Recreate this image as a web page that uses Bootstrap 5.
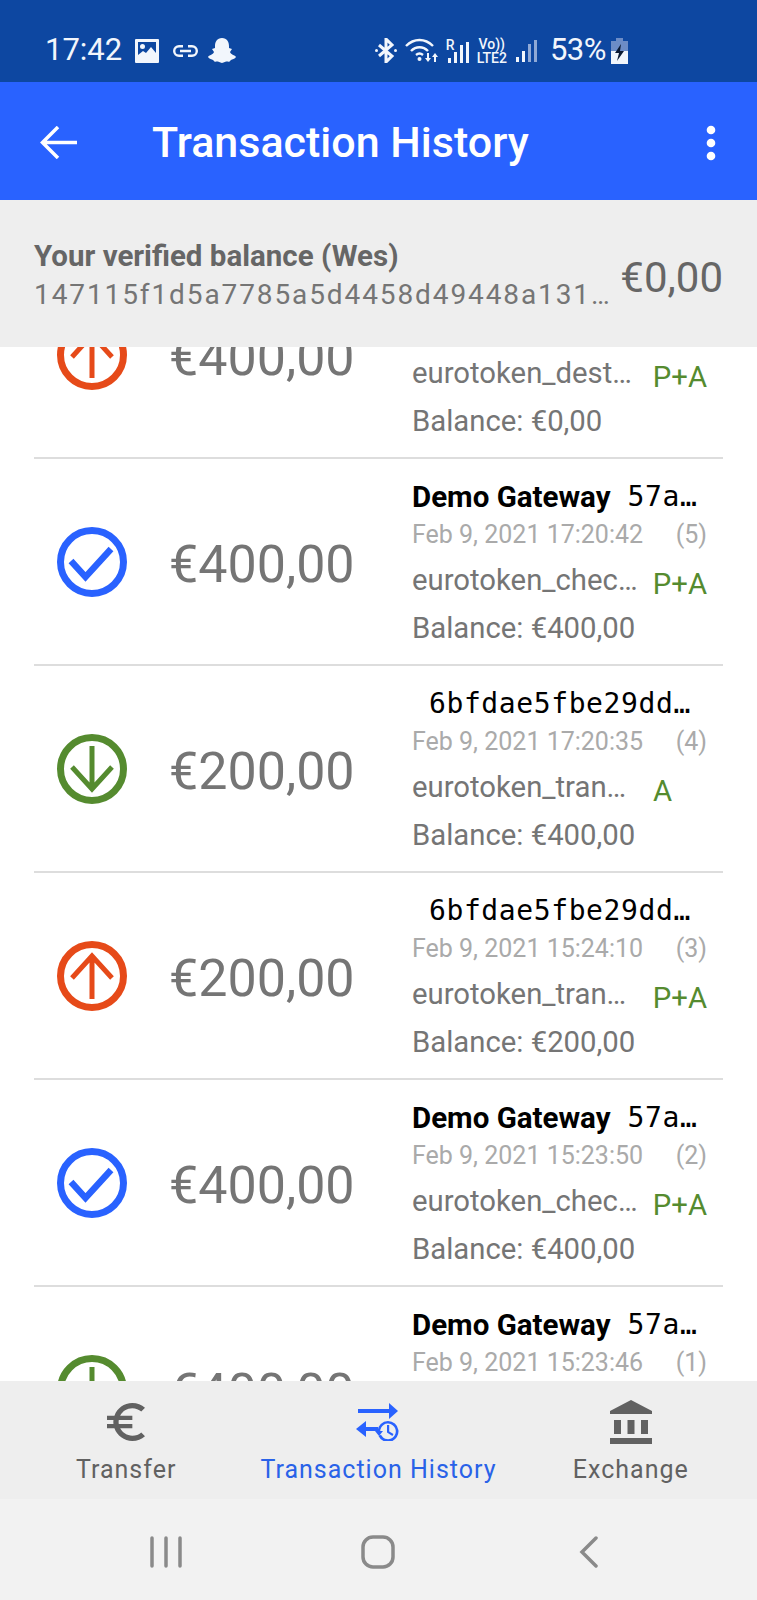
<!DOCTYPE html>
<html lang="en">
<head>
    <meta charset="UTF-8">
    <meta name="viewport" content="width=device-width, initial-scale=1.0">
    <title>Transaction History</title>
    <link href="https://cdn.jsdelivr.net/npm/bootstrap@5.3.0/dist/css/bootstrap.min.css" rel="stylesheet">
    <style>
        body {
            font-family: Roboto, "Liberation Sans", sans-serif;
            background-color: #fff;
            margin: 0;
        }
        .phone-screen { width: 757px; height: 1600px; }
        .status-strip {
            height: 82px;
            background-color: #0d47a1;
            color: #f2f6fc;
            padding: 19px 129px 0 45px;
            flex-shrink: 0;
        }
        .status-time { font-size: 31px; width: 90px; }
        .status-link { margin-left: 14px; }
        .status-ghost { margin-left: 10px; }
        .status-pct { font-size: 31px; letter-spacing: -.5px; margin-left: 13px; margin-right: 5px; }
        .status-tiny { font-size: 14px; line-height: 14px; font-weight: 500; text-align: center; }
        .app-bar {
            height: 118px;
            background-color: #2962ff;
            padding: 3px 40px 0 40px;
            flex-shrink: 0;
            flex-wrap: nowrap;
        }
        .app-title {
            color: #fff;
            font-size: 43px;
            font-weight: 500;
            margin: 0 0 0 75px;
            padding: 0;
        }
        .balance-strip {
            height: 147px;
            background-color: #eee;
            padding: 4px 34px 0;
            flex-shrink: 0;
            z-index: 2;
        }
        .balance-title { font-size: 29.5px; font-weight: 700; color: #666; line-height: 38px; }
        .balance-key { font-size: 28px; color: #757575; letter-spacing: 1.9px; line-height: 40px; width: 580px; }
        .balance-amount { font-size: 42px; color: #666; margin-top: 3px; }
        .tx-scroller { flex: 1 1 0; overflow: hidden; }
        .tx-list { margin: -95px 34px 0; }
        .tx-row { height: 207px; border-bottom: 2px solid #ddd; }
        .tx-icon { width: 70px; height: 70px; margin-left: 23px; flex-shrink: 0; }
        .tx-amount { font-size: 52px; color: #757575; margin: 6px 0 0 42px; width: 243px; flex-shrink: 0; line-height: 1; }
        .tx-info { width: 295px; padding-top: 19px; height: 100%; }
        .tx-who { height: 39px; line-height: 38px; font-size: 29.5px; font-weight: 700; color: #000; white-space: nowrap; }
        .tx-hash { font-family: "DejaVu Sans Mono", monospace; font-weight: 400; font-size: 28px; letter-spacing: .6px; }
        .tx-hash-short { margin-left: 17px; }
        .tx-hash-only { margin-left: 17px; }
        .tx-date { height: 36px; line-height: 36px; font-size: 25px; color: #aaa; }
        .tx-kind { height: 54px; line-height: 54px; font-size: 29.3px; color: #757575; }
        .tx-kind-name { width: 226px; margin-right: 15px; }
        .tx-flag { color: #558b2f; font-size: 29.3px; padding-top: 4px; }
        .tx-balance { height: 42px; line-height: 42px; font-size: 29.3px; color: #757575; }
        .bottom-tabs {
            height: 118px;
            background-color: #eee;
            flex-shrink: 0;
            color: #616161;
            z-index: 2;
        }
        .tab-item { font-size: 25px; letter-spacing: 1px; line-height: 32px; }
        .tab-icon { height: 38px; margin: 22px 0 13px; }
        .tab-icon-tall { height: 44px; margin: 19px 0 10px; }
        .tab-active { color: #2962e8; }
        .system-bar {
            height: 101px;
            background-color: #f2f2f2;
            flex-shrink: 0;
            padding-top: 4px;
        }
        .sys-left { padding-left: 80px; }
        .sys-right { padding-right: 84px; }
    </style>
</head>
<body>
    <svg width="0" height="0" class="d-block position-absolute">
        <symbol id="ic-check" viewBox="-35 -35 70 70">
            <circle r="31.5" fill="none" stroke="#2962ff" stroke-width="7"/>
            <path d="M-21-1-6.500 15 19-13" fill="none" stroke="#2962ff" stroke-width="6.500"/>
        </symbol>
        <symbol id="ic-down" viewBox="-35 -35 70 70">
            <circle r="31.5" fill="none" stroke="#558b2f" stroke-width="7"/>
            <path d="M0-23V19M-20-2 0 20 20-2" fill="none" stroke="#558b2f" stroke-width="5"/>
        </symbol>
        <symbol id="ic-up" viewBox="-35 -35 70 70">
            <circle r="31.5" fill="none" stroke="#e64a19" stroke-width="7"/>
            <path d="M0 23V-19M-20 2 0-20 20 2" fill="none" stroke="#e64a19" stroke-width="5"/>
        </symbol>
    </svg>

    <div class="phone-screen d-flex flex-column overflow-hidden">
        <!-- phone status bar -->
        <div class="status-strip d-flex align-items-center">
            <span class="status-time">17:42</span>
            <svg width="24" height="24" viewBox="0 0 24 24" class="flex-shrink-0"><path fill="#f2f6fc" fill-rule="evenodd" d="M1 0h22a1 1 0 0 1 1 1v22a1 1 0 0 1-1 1H1a1 1 0 0 1-1-1V1a1 1 0 0 1 1-1zM3 3v13l5-4 3 2 5-6 5 6V3zM7.500 5a2.500 2.500 0 1 1 0 5 2.500 2.500 0 0 1 0-5z"/></svg>
            <svg width="25" height="12" viewBox="0 0 25 12" class="status-link flex-shrink-0"><path fill="none" stroke="#f2f6fc" stroke-width="2.400" d="M10 1.200H6a4.800 4.800 0 0 0 0 9.600h4M15 1.200h4a4.800 4.800 0 0 1 0 9.600h-4M7 6h11"/></svg>
            <svg width="28" height="25" viewBox="0 0 28 25" class="status-ghost flex-shrink-0"><path fill="#f2f6fc" d="M14 0c5 0 7 4 7 8v2l3 1-2 3c1 3 5 3 6 5-1 2-4 2-5 3l-2 2c-2-1-4 0-7 1-3-1-5-2-7-1l-2-2c-1-1-4-1-5-3 1-2 5-2 6-5l-2-3 3-1V8c0-4 2-8 7-8z"/></svg>
            <svg width="22" height="25" viewBox="0 0 22 25" class="ms-auto flex-shrink-0"><path fill="none" stroke="#f2f6fc" stroke-width="3" d="M4 7l13 11-6 6V1l6 6L4 18"/><circle cx="1.500" cy="12.500" r="1.500" fill="#f2f6fc"/><circle cx="20.500" cy="12.500" r="1.500" fill="#f2f6fc"/></svg>
            <svg width="33" height="25" viewBox="0 0 33 25" class="ms-2 flex-shrink-0"><path fill="none" stroke="#f2f6fc" stroke-width="2.400" d="M1 8c8-8 19-8 27 0M6 13c5-5 12-5 17 0M11 17c2.500-2 4.500-2 7 0"/><circle cx="14.500" cy="21" r="2" fill="#f2f6fc"/><path fill="#f2f6fc" d="M22 15h2v5h2l-3 4-3-4h2zM29 24h2v-5h2l-3-4-3 4h2z"/></svg>
            <div class="position-relative ms-2 flex-shrink-0" style="width:23px;height:25px">
                <span class="status-tiny position-absolute top-0 start-0">R</span>
                <svg width="22" height="23" viewBox="0 0 22 23" class="position-absolute bottom-0 end-0"><path fill="#f2f6fc" d="M1 18h3v5H1zM7 12h3v11H7zM13 5h3v18h-3zM19 2h3v21h-3z"/></svg>
            </div>
            <div class="status-tiny ms-2 flex-shrink-0">Vo))<br>LTE2</div>
            <svg width="22" height="23" viewBox="0 0 22 23" class="ms-2 flex-shrink-0"><path fill="#f2f6fc" d="M1 18h3v5H1zM7 12h3v11H7z"/><path fill="#8fa9d6" d="M13 5h3v18h-3zM19 1h3v22h-3z"/></svg>
            <span class="status-pct">53%</span>
            <svg width="17" height="26" viewBox="0 0 17 26" class="flex-shrink-0"><path fill="#6c8cc6" d="M5 0h7v3h5v11H0V3h5z"/><path fill="#f2f6fc" d="M0 13h17v13H0z"/><path fill="#0b1a33" d="M10 6 4 15h4l-2 8 7-10H9z"/></svg>
        </div>

        <!-- app bar -->
        <nav class="navbar app-bar">
            <svg width="37" height="33" viewBox="0 0 37 33" class="flex-shrink-0"><path fill="none" stroke="#fff" stroke-width="3.500" d="M37 16.500H3M18 1 2.500 16.500 18 32"/></svg>
            <h1 class="app-title navbar-brand me-auto">Transaction History</h1>
            <svg width="12" height="36" viewBox="0 0 12 36" class="flex-shrink-0"><g fill="#fff"><circle cx="6" cy="5" r="4.300"/><circle cx="6" cy="18" r="4.300"/><circle cx="6" cy="31" r="4.300"/></g></svg>
        </nav>

        <!-- balance header -->
        <div class="balance-strip d-flex align-items-center justify-content-between">
            <div>
                <div class="balance-title">Your verified balance (Wes)</div>
                <div class="balance-key text-truncate">147115f1d5a7785a5d4458d49448a131f3c2</div>
            </div>
            <div class="balance-amount">€0,00</div>
        </div>

        <!-- transactions, scrolled part way down -->
        <div class="tx-scroller">
            <div class="tx-list">
                <div class="tx-row d-flex align-items-center">
                    <svg class="tx-icon"><use href="#ic-up"/></svg>
                    <div class="tx-amount">€400,00</div>
                    <div class="tx-info">
                        <div class="tx-who d-flex">Demo Gateway<span class="tx-hash tx-hash-short">57a…</span></div>
                        <div class="tx-date d-flex justify-content-between"><span>Feb 9, 2021 17:20:50</span><span>(6)</span></div>
                        <div class="tx-kind d-flex"><span class="tx-kind-name text-truncate">eurotoken_destroy</span><span class="tx-flag">P+A</span></div>
                        <div class="tx-balance">Balance: €0,00</div>
                    </div>
                </div>
                <div class="tx-row d-flex align-items-center">
                    <svg class="tx-icon"><use href="#ic-check"/></svg>
                    <div class="tx-amount">€400,00</div>
                    <div class="tx-info">
                        <div class="tx-who d-flex">Demo Gateway<span class="tx-hash tx-hash-short">57a…</span></div>
                        <div class="tx-date d-flex justify-content-between"><span>Feb 9, 2021 17:20:42</span><span>(5)</span></div>
                        <div class="tx-kind d-flex"><span class="tx-kind-name text-truncate">eurotoken_checkpoint</span><span class="tx-flag">P+A</span></div>
                        <div class="tx-balance">Balance: €400,00</div>
                    </div>
                </div>
                <div class="tx-row d-flex align-items-center">
                    <svg class="tx-icon"><use href="#ic-down"/></svg>
                    <div class="tx-amount">€200,00</div>
                    <div class="tx-info">
                        <div class="tx-who d-flex"><span class="tx-hash tx-hash-only">6bfdae5fbe29dd…</span></div>
                        <div class="tx-date d-flex justify-content-between"><span>Feb 9, 2021 17:20:35</span><span>(4)</span></div>
                        <div class="tx-kind d-flex"><span class="tx-kind-name text-truncate">eurotoken_transfer</span><span class="tx-flag">A</span></div>
                        <div class="tx-balance">Balance: €400,00</div>
                    </div>
                </div>
                <div class="tx-row d-flex align-items-center">
                    <svg class="tx-icon"><use href="#ic-up"/></svg>
                    <div class="tx-amount">€200,00</div>
                    <div class="tx-info">
                        <div class="tx-who d-flex"><span class="tx-hash tx-hash-only">6bfdae5fbe29dd…</span></div>
                        <div class="tx-date d-flex justify-content-between"><span>Feb 9, 2021 15:24:10</span><span>(3)</span></div>
                        <div class="tx-kind d-flex"><span class="tx-kind-name text-truncate">eurotoken_transfer</span><span class="tx-flag">P+A</span></div>
                        <div class="tx-balance">Balance: €200,00</div>
                    </div>
                </div>
                <div class="tx-row d-flex align-items-center">
                    <svg class="tx-icon"><use href="#ic-check"/></svg>
                    <div class="tx-amount">€400,00</div>
                    <div class="tx-info">
                        <div class="tx-who d-flex">Demo Gateway<span class="tx-hash tx-hash-short">57a…</span></div>
                        <div class="tx-date d-flex justify-content-between"><span>Feb 9, 2021 15:23:50</span><span>(2)</span></div>
                        <div class="tx-kind d-flex"><span class="tx-kind-name text-truncate">eurotoken_checkpoint</span><span class="tx-flag">P+A</span></div>
                        <div class="tx-balance">Balance: €400,00</div>
                    </div>
                </div>
                <div class="tx-row d-flex align-items-center">
                    <svg class="tx-icon"><use href="#ic-down"/></svg>
                    <div class="tx-amount">€400,00</div>
                    <div class="tx-info">
                        <div class="tx-who d-flex">Demo Gateway<span class="tx-hash tx-hash-short">57a…</span></div>
                        <div class="tx-date d-flex justify-content-between"><span>Feb 9, 2021 15:23:46</span><span>(1)</span></div>
                    </div>
                </div>
            </div>
        </div>

        <!-- bottom navigation -->
        <div class="bottom-tabs row g-0 text-center">
            <div class="col-4 tab-item">
                <svg class="tab-icon d-block mx-auto" width="40" height="38" viewBox="3 3 18 18"><path fill="#616161" d="M15 18.500c-2.510 0-4.680-1.420-5.760-3.500H15v-2H8.580c-.05-.33-.08-.66-.08-1s.03-.67.08-1H15V9H9.240C10.320 6.920 12.500 5.500 15 5.500c1.610 0 3.090.59 4.230 1.570L21 5.300C19.410 3.870 17.300 3 15 3c-3.920 0-7.240 2.510-8.480 6H3v2h3.060c-.04.33-.06.66-.06 1s.02.67.06 1H3v2h3.520c1.240 3.490 4.560 6 8.480 6 2.310 0 4.410-.87 6-2.300l-1.780-1.770c-1.130.98-2.600 1.570-4.220 1.570z"/></svg>
                <div>Transfer</div>
            </div>
            <div class="col-4 tab-item tab-active">
                <svg class="tab-icon d-block mx-auto" width="44" height="38" viewBox="0 0 44 38"><g fill="#2962ff"><path d="M2 6h31V0l9 8-9 8v-6H2zM10 18v6h12v4H10v6l-10-8z"/><path fill-rule="evenodd" d="M32 18a10.500 10.500 0 1 1-9.500 15l2.500-1.200A7.800 7.800 0 1 0 24.200 28H27l-4 5-4-5h2.500A10.500 10.500 0 0 1 32 18z"/><path d="M31 22h2.200v6.500l4.300 2.600-1.100 1.800-5.400-3.300z"/></g></svg>
                <div>Transaction History</div>
            </div>
            <div class="col-4 tab-item">
                <svg class="tab-icon tab-icon-tall d-block mx-auto" width="44" height="44" viewBox="0 0 44 44"><path fill="#616161" d="M22 0 43 11v3H1v-3zM5 20h7v14H5zM18.500 20h7v14h-7zM32 20h7v14h-7zM1 38h42v6H1z"/></svg>
                <div>Exchange</div>
            </div>
        </div>

        <!-- android buttons -->
        <div class="system-bar d-flex align-items-center">
            <div class="col-4 d-flex justify-content-center sys-left">
                <svg width="32" height="32" viewBox="0 0 32 32"><path fill="none" stroke="#8a8a8a" stroke-width="3.500" stroke-linecap="round" d="M2 2v28M16 2v28M30 2v28"/></svg>
            </div>
            <div class="col-4 d-flex justify-content-center">
                <svg width="34" height="34" viewBox="0 0 34 34"><rect x="2" y="2" width="30" height="30" rx="10" fill="none" stroke="#8a8a8a" stroke-width="3.500"/></svg>
            </div>
            <div class="col-4 d-flex justify-content-center sys-right">
                <svg width="20" height="32" viewBox="0 0 20 32"><path fill="none" stroke="#8a8a8a" stroke-width="3.500" stroke-linecap="round" d="M17 2 3 16l14 14"/></svg>
            </div>
        </div>
    </div>
    <script src="https://cdn.jsdelivr.net/npm/bootstrap@5.3.0/dist/js/bootstrap.bundle.min.js"></script>
</body>
</html>
